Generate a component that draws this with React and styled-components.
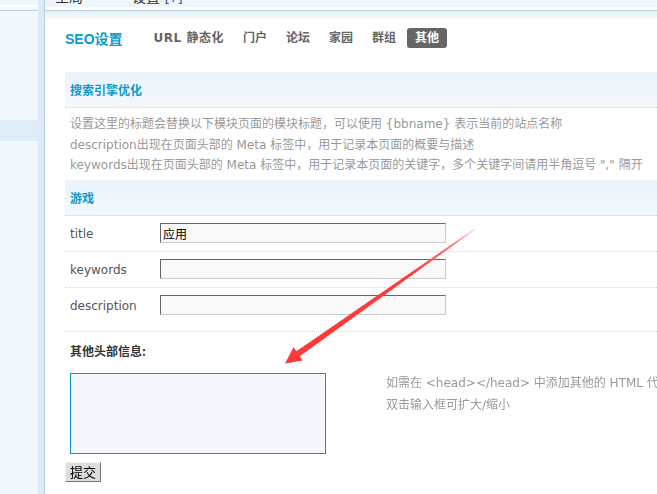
import React from 'react'
import styled, { createGlobalStyle } from 'styled-components';

const Global = createGlobalStyle`
    html, body { margin: 0; padding: 0; background: #fff; }
    body {
        font-family: "DejaVu Sans", "Noto Sans CJK SC", sans-serif;
        font-size: 12px;
    }
`
const Page = styled.div`
    position: relative;
    display: flex;
    width: 657px;
    height: 494px;
    overflow: hidden;
`
const Side = styled.div`
    display: flex;
    flex: none;
`
const SideCol = styled.div`
    width: 38px;
    background: #f2f8fc;
`
const SideTop = styled.div`
    height: 5px;
    background: #eef6fb;
    border-bottom: 2px solid #fff;
`
const SideGap = styled.div`
    height: 3px;
    border-bottom: 1px solid #b7d3e3;
`
const SideBand = styled.div`
    margin-top: 109px;
    height: 21px;
    background: #deedf8;
`
const SideStrip = styled.div`
    width: 6px;
    background: #dcebf7;
    border-right: 1px solid #b5d1e2;
`
const Main = styled.div`
    flex: 1;
    min-width: 0;
    overflow: hidden;
`
const Crumb = styled.div`
    height: 7px;
    overflow: hidden;
    background: #eef6fb;
    border-bottom: 3px solid #fff;
    padding-left: 10px;
    white-space: nowrap;
    span {
        display: block;
        margin-top: -10px;
        line-height: 14px;
        font-size: 14px;
        color: #333;
    }
    b { color: #2366a8; font-weight: normal; }
`
const Shade = styled.div`
    height: 10px;
    border-top: 1px solid #b7d3e3;
    background: linear-gradient(#e3eff7, #fff);
`
const Content = styled.div`
    padding: 7px 0 0 20px;
`
const TabBar = styled.div`
    display: flex;
    align-items: center;
    gap: 3px;
    height: 20px;
`
const PageTitle = styled.div`
    font-family: "Liberation Sans", "Noto Sans CJK SC", sans-serif;
    font-size: 14px;
    font-weight: bold;
    color: #0a9acb;
    margin-right: 20px;
`
const Tab = styled.div`
    height: 20px;
    line-height: 20px;
    padding: 0 8px;
    border-radius: 3px;
    font-family: "DejaVu Sans", "Noto Sans CJK SC", sans-serif;
    font-size: 12px;
    font-weight: bold;
    letter-spacing: ${(props)=>props.$wide ? "0.5px" : "0"};
    color: ${(props)=>props.$active ? "#fff" : "#666"};
    background: ${(props)=>props.$active ? "#666" : "transparent"};
`
const Panel = styled.div`
    width: 640px;
    margin-top: 24px;
`
const SectionHead = styled.div`
    height: 35px;
    line-height: 35px;
    padding-left: 5px;
    background: linear-gradient(#ebf3fb, #f3f8fc);
    border-bottom: 1px dotted #c6dbe8;
    color: #0a9acb;
    font-weight: bold;
    font-family: "Noto Sans CJK SC", sans-serif;
`
const Tips = styled.div`
    padding: 6px 5px 4px;
    line-height: 20.5px;
    color: #999;
    white-space: nowrap;
`
const FieldRow = styled.div`
    display: flex;
    align-items: center;
    height: 35px;
    border-bottom: 1px dotted #c6dbe8;
    padding-left: 5px;
    padding-bottom: ${(props)=>props.$tall ? "8px" : "0"};
`
const Label = styled.div`
    width: 90px;
    padding-top: 2px;
    color: #555;
`
const TextInput = styled.input`
    width: 286px;
    height: 20px;
    box-sizing: border-box;
    margin: 0;
    padding: 0 2px;
    border: 1px solid;
    border-color: #666 #ccc #ccc #666;
    background: #f9f9f9;
    font-family: "Noto Sans CJK SC", sans-serif;
    font-size: 12px;
    color: #000;
    outline: none;
`
const ExtraTitle = styled.div`
    padding: 10px 0 0 5px;
    line-height: 18px;
    font-weight: bold;
    color: #333;
    font-family: "Noto Sans CJK SC", sans-serif;
`
const ExtraRow = styled.div`
    display: flex;
    align-items: flex-start;
    margin-top: 13px;
    padding-left: 5px;
`
const Area = styled.textarea`
    flex: none;
    width: 256px;
    height: 81px;
    box-sizing: border-box;
    margin: 0;
    border: 1px solid #0a9acb;
    background: #f4f8fc;
    resize: none;
    outline: none;
    font-size: 12px;
`
const Help = styled.div`
    margin: -1px 0 0 60px;
    line-height: 22px;
    color: #999;
    white-space: nowrap;
`
const Submit = styled.button`
    display: block;
    margin-top: 8px;
    width: 36px;
    height: 20px;
    padding: 0;
    border: 1px solid;
    border-color: #f4f4f4 #777 #777 #f4f4f4;
    background: #ddd;
    font-family: "Noto Sans CJK SC", sans-serif;
    font-size: 13px;
    line-height: 16px;
    color: #000;
`
const Overlay = styled.svg`
    position: absolute;
    left: 0;
    top: 0;
    pointer-events: none;
`

const fields = [
    { label: "title", value: "应用" },
    { label: "keywords", value: "" },
    { label: "description", value: "", tall: true },
]

export default function App() {
    return (
        <>
            <Global />
            <Page>
                <Side>
                    <SideCol>
                        <SideTop />
                        <SideGap />
                        <SideBand />
                    </SideCol>
                    <SideStrip />
                </Side>
                <Main>
                    <Crumb><span>全局 &nbsp; &nbsp; &nbsp; &nbsp; &nbsp; 设置 <b>[?]</b></span></Crumb>
                    <Shade />
                    <Content>
                        <TabBar>
                            <PageTitle>SEO设置</PageTitle>
                            <Tab $wide>URL 静态化</Tab>
                            <Tab>门户</Tab>
                            <Tab>论坛</Tab>
                            <Tab>家园</Tab>
                            <Tab>群组</Tab>
                            <Tab $active>其他</Tab>
                        </TabBar>
                        <Panel>
                            <SectionHead>搜索引擎优化</SectionHead>
                            <Tips>
                                设置这里的标题会替换以下模块页面的模块标题，可以使用 {"{bbname}"} 表示当前的站点名称<br />
                                description出现在页面头部的 Meta 标签中，用于记录本页面的概要与描述<br />
                                keywords出现在页面头部的 Meta 标签中，用于记录本页面的关键字，多个关键字间请用半角逗号 "," 隔开
                            </Tips>
                            <SectionHead>游戏</SectionHead>
                            {fields.map((f)=>(
                                <FieldRow key={f.label} $tall={f.tall}>
                                    <Label>{f.label}</Label>
                                    <TextInput defaultValue={f.value} />
                                </FieldRow>
                            ))}
                            <ExtraTitle>其他头部信息:</ExtraTitle>
                            <ExtraRow>
                                <Area autoFocus />
                                <Help>
                                    如需在 &lt;head&gt;&lt;/head&gt; 中添加其他的 HTML 代码<br />
                                    双击输入框可扩大/缩小
                                </Help>
                            </ExtraRow>
                            <Submit>提交</Submit>
                        </Panel>
                    </Content>
                </Main>
                <Overlay width="657" height="494" viewBox="0 0 657 494">
                    <defs>
                        <linearGradient id="arrowFill" gradientUnits="userSpaceOnUse" x1="475" y1="229" x2="285" y2="363">
                            <stop offset="0" stopColor="#ffe0e0" />
                            <stop offset="0.12" stopColor="#ff7070" />
                            <stop offset="0.35" stopColor="#ff3b3b" />
                            <stop offset="1" stopColor="#ff3838" />
                        </linearGradient>
                    </defs>
                    <polygon
                        fill="url(#arrowFill)"
                        points="474.6,228.6 296.4,351.3 293.5,347.3 285,363.5 302.7,360.4 299.8,356.3 475.4,229.4"
                    />
                </Overlay>
            </Page>
        </>
    )
}
